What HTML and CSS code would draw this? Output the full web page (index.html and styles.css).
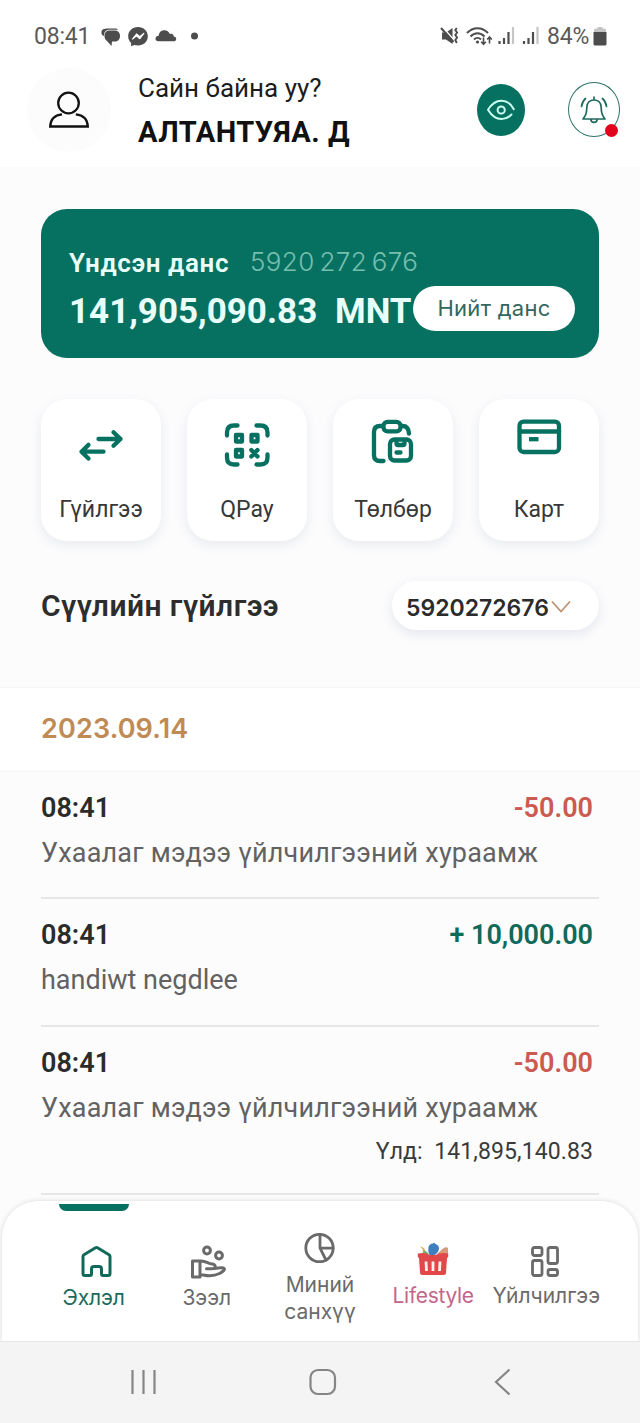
FILE: index.html
```html
<!DOCTYPE html>
<html lang="mn">
<head>
<meta charset="utf-8">
<title>Эхлэл</title>
<link rel="stylesheet" href="styles.css">
</head>
<body>
<div class="phone">
  <div class="status">
    <span class="clock">08:41</span>
    <svg class="status-left" width="100" height="24" viewBox="0 0 100 24" fill="#4d4d4d">
      <path d="M.5 9.500C0 5 3 4.500 7 4.500h7c1.500 0 2.500.5 3 1.200H8.500C4.500 5.700 3 8 3 12 1.500 11.500.7 10.500.5 9.500Z"/>
      <path d="M9 6.500h4c4 0 6 2 6 5.500s-2 5.500-5.500 5.500H11l-.5 4.500-4.500-5c-1.700-1-2.500-2.800-2.500-5 0-3.500 1.800-5.500 5.500-5.500Z"/>
      <path d="M37 3c-5.600 0-9.800 4-9.800 9.200 0 2.800 1.100 5 2.900 6.700v3.300l3.300-1.200c1.100.3 2.300.5 3.600.5 5.600 0 9.800-4 9.800-9.300C46.800 7 42.600 3 37 3Z"/>
      <path d="m31.500 15 4-5 3.300 2.800 4-3.300-4 5.200-3.300-2.800Z" fill="#fff" stroke="#fff" stroke-width="1.200" stroke-linejoin="round"/>
      <path d="M57.500 17.300c-2.200 0-3-1.300-3-2.600 0-1.700 1.400-2.800 3.200-2.900.2-3.500 2.600-5.600 5.600-5.600 2.800 0 4.600 1.600 5.500 3.700 3.500-.6 4 2 3.900 2.600 1.600.2 2.500 1.200 2.500 2.500 0 1.400-1.100 2.300-2.700 2.300Z"/>
      <circle cx="93.500" cy="12" r="3.500"/>
    </svg>
    <svg class="status-right" width="106" height="24" viewBox="0 0 106 24" fill="none" stroke="#4d4d4d" stroke-width="1.800">
      <path d="M2 8.500h4L12.500 4v16L6 15.500H2Z" fill="#4d4d4d" stroke="none"/>
      <path d="M2.500 3 14.500 16.500" stroke="#fff" stroke-width="1.500"/>
      <path d="M1 4 13.500 18" stroke-width="2"/>
      <path d="m16.800 4-1.500 2 1.800 2.500-1.800 2.500 1.800 2.500-1.800 2.500 1.500 3" stroke-width="1.900"/>
      <path d="M27 9c6-6.500 15-6.500 21 0M30.500 12.500c4-4.300 10-4.300 14 0M34 15.500c2-2 5-2 7 0" stroke-width="2"/>
      <circle cx="37.500" cy="18" r="1.600" fill="#4d4d4d" stroke="none"/>
      <path d="M43.500 13.500v6.500m-2.300-2.300 2.300 2.500 2.300-2.500M49.500 19.500V13m-2.300 2.500 2.300-2.500 2.300 2.500" stroke-width="1.600"/>
      <path d="M59.500 20v-3M64 20v-6M68.500 20V8M84 20v-3M88.500 20v-6M93 20V8" stroke-width="2.200"/>
      <path d="M73 20V3M97.500 20V3" stroke="#c6c6c6" stroke-width="2.200"/>
    </svg>
    <span class="percent">84%</span>
    <svg width="14" height="22" viewBox="0 0 14 22">
      <path d="M1 8V5.500q0-2 2-2h1.500V2h5v1.500H11q2 0 2 2V8Z" fill="#c4c4c4"/>
      <path d="M.5 7h13v12q0 1.500-1.500 1.500H2Q.5 20.500.5 19Z" fill="#4d4d4d"/>
    </svg>
  </div>

  <header class="header">
    <div class="avatar">
      <svg width="44" height="40" viewBox="0 0 44 40" fill="none" stroke="#111" stroke-width="2.300">
        <circle cx="21.500" cy="13" r="10.300"/>
        <path d="M15 24.300C8 25 3.500 29 3.200 36.500h37.600c-.3-7.500-4.800-11.500-12-12.200"/>
      </svg>
    </div>
    <div class="greeting">
      <div class="hello">Сайн байна уу?</div>
      <div class="name">АЛТАНТУЯА. Д</div>
    </div>
    <div class="eye">
      <svg width="30" height="24" viewBox="0 0 30 24" fill="none" stroke="#c9fff0" stroke-width="2" stroke-linecap="round" stroke-linejoin="round">
        <path d="M25.500 16.500C22.500 19.600 19 21 15.500 21 10 21 5.500 17.500 2 11.700 5.500 6 10 2.700 15.500 2.700c5 0 9.400 3 12.300 8.500"/>
        <circle cx="15.200" cy="12" r="3.600"/>
      </svg>
    </div>
    <div class="bell">
      <svg width="28" height="30" viewBox="0 0 28 30" fill="none" stroke="#1f6a5e" stroke-width="1.700" stroke-linecap="round" stroke-linejoin="round">
        <path d="M14 2v3M6.800 12.500C6.800 7.500 10 5 14 5s7.200 2.500 7.200 7.500c0 6 1.300 8 3.800 11.500H3c2.500-3.500 3.800-5.500 3.800-11.500ZM10.800 24.200c.3 4.200 6.100 4.200 6.400 0M5.500 3.500C3.200 5.500 2 8 1.500 11.500M22.500 3.500c2.300 2 3.500 4.500 4 8"/>
      </svg>
      <i class="dot"></i>
    </div>
  </header>

  <section class="account">
    <div class="account-row">
      <span class="account-title">Үндсэн данс</span>
      <span class="account-number">5920 272 676</span>
    </div>
    <div class="account-row">
      <span class="amount">141,905,090.83</span>
      <span class="currency">MNT</span>
      <span class="pill">Нийт данс</span>
    </div>
  </section>

  <nav class="tiles">
    <div class="tile">
      <svg class="tile-icon" viewBox="0 0 120 95">
        <path d="M57.500 40h22M72.500 33.200l7 6.800-7 6.800M62.500 52.700h-22M47.500 45.900l-7 6.800 7 6.800"/>
      </svg>
      <span>Гүйлгээ</span>
    </div>
    <div class="tile">
      <svg class="tile-icon" viewBox="0 0 120 95">
        <path d="M40 36.500V33.500q0-7 7-7h3.500M69.500 26.500h4q7 0 7 7v3M80.500 55.500v3q0 7-7 7h-4M50.500 65.500H47q-7 0-7-7v-3"/>
        <path d="M49 36h6v6.500h-6ZM64.500 36h6v6.500h-6ZM49 51h6v6.500h-6ZM64.300 51l6.200 6.500M70.500 51l-6.200 6.500"/>
      </svg>
      <span>QPay</span>
    </div>
    <div class="tile">
      <svg class="tile-icon" viewBox="0 0 120 95">
        <rect x="50.500" y="22.800" width="17" height="9.500" rx="4"/>
        <path d="M50 27h-3q-6 0-6 6v23q0 6 6 6h3.500M68 27h1.500q6 0 6.500 7.500"/>
        <rect x="57" y="40.500" width="21" height="21" rx="4.500"/>
        <path d="M63.500 41.500v3q0 1.500 1.500 1.500h5q1.500 0 1.500-1.500v-3M63.500 53.500h4"/>
      </svg>
      <span>Төлбөр</span>
    </div>
    <div class="tile">
      <svg class="tile-icon" viewBox="0 0 120 95">
        <rect x="40.500" y="22.700" width="39.500" height="30.300" rx="4"/>
        <path d="M41 32.500h39"/>
        <path d="M50 40.200h9.500" stroke-linecap="butt"/>
      </svg>
      <span>Карт</span>
    </div>
  </nav>

  <div class="recent">
    <h2 class="recent-title">Сүүлийн гүйлгээ</h2>
    <div class="select">
      <span>5920272676</span>
      <svg width="22" height="16" viewBox="0 0 22 16" fill="none" stroke="#bd8f70" stroke-width="1.700"><path d="m2 1.500 9 10 9-10"/></svg>
    </div>
  </div>

  <div class="date">2023.09.14</div>

  <ul class="list">
    <li class="row">
      <div class="line"><span class="time">08:41</span><span class="sum out">-50.00</span></div>
      <div class="desc">Ухаалаг мэдээ үйлчилгээний хураамж</div>
    </li>
    <li class="row">
      <div class="line"><span class="time">08:41</span><span class="sum in">+ 10,000.00</span></div>
      <div class="desc latin">handiwt negdlee</div>
    </li>
    <li class="row tall">
      <div class="line"><span class="time">08:41</span><span class="sum out">-50.00</span></div>
      <div class="desc">Ухаалаг мэдээ үйлчилгээний хураамж</div>
      <div class="balance">Үлд:&nbsp; 141,895,140.83</div>
    </li>
  </ul>

  <nav class="tabs">
    <div class="tab home">
      <svg width="36" height="36" viewBox="0 0 36 36"><path d="M7 13.500q0-1 1-1.700L19.500 4.700q1-.6 2 0L33 11.800q1 .7 1 1.700V30.500q0 2-2 2h-5q-1.500 0-1.500-1.500v-5q0-2.500-2.500-2.500h-5q-2.500 0-2.500 2.500v5q0 1.500-1.500 1.500H9q-2 0-2-2Z"/></svg>
      <span>Эхлэл</span>
    </div>
    <div class="tab loan">
      <svg width="36" height="36" viewBox="0 0 36 36"><circle cx="18" cy="7.500" r="3.400"/><circle cx="30" cy="12.500" r="3.400"/><path d="M3.500 18h7.500v16H3.500ZM11 18c6-.5 8 2.800 12 3 4 .3 4.500 4.800 0 4.800h-5.500M25.500 25.500c3-.5 6-1.300 9-.5 3 1.500-2 4.500-4 5.500-5 2.500-12 2.500-16 1.500H11"/></svg>
      <span>Зээл</span>
    </div>
    <div class="tab finance">
      <svg width="36" height="36" viewBox="0 0 36 36"><circle cx="17.500" cy="18" r="13.700"/><path d="M18 4.500v13.700h13M18 18.200 24 30"/></svg>
      <span>Миний<br>санхүү</span>
    </div>
    <div class="tab life">
      <svg class="basket" width="36" height="36" viewBox="0 0 36 36">
        <path d="M5 5.500q5.500 0 6 8l-3.500-1q1.500-4-2.500-7Z" fill="#d9b25c"/>
        <path d="m22 13 6-5.500q3-2 5-.5v6Z" fill="#d79a78"/>
        <path d="M8 9.500q4 0 6 4H8Z" fill="#7fae74"/>
        <path d="M13.500 6q1-3.500 4.500-3.500l1-1 1.500 1.500q3.500 1 3.500 4.500-.5 4-4.500 6.500h-5q-2-4.500-1-8Z" fill="#3f7fc0"/>
        <path d="M2.800 12.500q7.500-1.500 12 1.500h5.500q6-3 12.900-1.500v3.500L32 17l-1 14.500q0 2.500-2.500 2.500h-21Q5 34 5 31.500L4 17l-1.200-1Z" fill="#e2484a"/>
        <path d="M11 20.500l.5 9.500M18 20.500v9.500M25 20.500l-.5 9.500" stroke="#fff0ea" stroke-width="2.800"/>
      </svg>
      <span>Lifestyle</span>
    </div>
    <div class="tab services">
      <svg width="36" height="36" viewBox="0 0 36 36"><rect x="4.500" y="4.500" width="9.500" height="8" rx="2"/><rect x="20" y="4.500" width="9.500" height="16" rx="2"/><rect x="4.500" y="17.500" width="9.500" height="15" rx="2"/><rect x="20" y="26.500" width="9.500" height="6" rx="2"/></svg>
      <span>Үйлчилгээ</span>
    </div>
  </nav>

  <div class="system">
    <svg viewBox="0 0 180 80"><path d="M78.500 28v24M89.500 28v24M100.500 28v24"/></svg>
    <svg viewBox="0 0 180 80"><rect x="76.500" y="28" width="24.500" height="24" rx="7.500"/></svg>
    <svg viewBox="0 0 180 80"><path d="M95.500 27.500 82 40l13.500 12.500"/></svg>
  </div>
</div>
</body>
</html>
```
FILE: styles.css
```css
* { box-sizing: border-box; }

body {
  margin: 0;
  background: #fff;
  font-family: Roboto, "Noto Sans", sans-serif;
  color: #2b2b2b;
}

svg { display: block; flex: none; overflow: visible; }

.phone {
  width: 640px;
  height: 1423px;
  overflow: hidden;
  display: flex;
  flex-direction: column;
  background: #fcfcfd;
}

.phone > * { flex: none; }

.status {
  height: 66px;
  padding: 6px 33px 0 34px;
  display: flex;
  align-items: center;
  background: #fff;
  color: #5a5a5a;
  font-size: 23px;
}
.clock { width: 67px; letter-spacing: -0.2px; }
.status-right { margin-left: auto; }
.percent { width: 46px; margin-left: 1px; letter-spacing: -0.2px; }

.header {
  height: 102px;
  padding: 0 20px 14px 27px;
  display: flex;
  align-items: center;
  background: #fff;
  border-bottom: 1px solid #fafafa;
}
.avatar {
  width: 84px;
  height: 84px;
  border-radius: 50%;
  background: #fcfcfc;
  display: flex;
  align-items: center;
  justify-content: center;
}
.greeting { margin-left: 27px; line-height: 44px; white-space: nowrap; color: #1c1c1c; }
.hello { font-size: 26px; }
.name { font-size: 29px; font-weight: 700; letter-spacing: 0.5px; color: #111; }
.eye {
  width: 48px;
  height: 52px;
  margin-left: auto;
  border-radius: 50%;
  background: #077161;
  display: flex;
  align-items: center;
  justify-content: center;
}
.bell {
  position: relative;
  width: 52px;
  height: 55px;
  margin-left: 43px;
  border: 1.5px solid #2d7468;
  border-radius: 50%;
  display: flex;
  align-items: center;
  justify-content: center;
}
.dot {
  position: absolute;
  right: 1px;
  bottom: -1px;
  width: 13px;
  height: 13px;
  border-radius: 50%;
  background: #e2041b;
}

.account {
  height: 149px;
  margin: 41px 41px 0;
  padding: 30px 24px 0 28px;
  border-radius: 26px;
  background: #077161;
  color: #e9fffa;
  white-space: nowrap;
}
.account-row { height: 48px; display: flex; align-items: center; }
.account-title { width: 181px; font-size: 26px; font-weight: 600; letter-spacing: 0.6px; }
.account-number { font: 300 26px/30px Inter, sans-serif; letter-spacing: 0.4px; word-spacing: -3px; color: #76bfae; margin-bottom: 3px; }
.amount { width: 266px; font-size: 35px; font-weight: 700; }
.currency { font-size: 35px; font-weight: 700; }
.pill {
  width: 162px;
  height: 45px;
  margin: 0 0 5px auto;
  border-radius: 23px;
  background: #fff;
  color: #336660;
  font: 400 22px/45px Inter, sans-serif;
  letter-spacing: 0.3px;
  text-align: center;
}

.tiles {
  margin: 41px 41px 0;
  display: flex;
  justify-content: space-between;
}
.tile {
  width: 120px;
  height: 142px;
  border-radius: 26px;
  background: #fff;
  box-shadow: 0 4px 12px rgba(60, 75, 120, 0.1);
  text-align: center;
  font-size: 23px;
  line-height: 32px;
  color: #383838;
}
.tile-icon {
  width: 120px;
  height: 95px;
  fill: none;
  stroke: #077161;
  stroke-width: 4.3;
  stroke-linecap: round;
  stroke-linejoin: round;
}

.recent {
  height: 49px;
  margin: 40px 41px 0;
  display: flex;
  align-items: center;
  justify-content: space-between;
}
.recent-title {
  margin: 0;
  font-size: 30px;
  font-weight: 600;
  letter-spacing: 0.45px;
  line-height: 49px;
  color: #2d2d2d;
}
.select {
  width: 207px;
  height: 49px;
  padding: 4px 14px 0;
  border-radius: 25px;
  background: #fff;
  box-shadow: 0 4px 12px rgba(60, 75, 120, 0.12);
  display: flex;
  align-items: center;
  gap: 1px;
  font: 600 23px Inter, sans-serif;
}

.date {
  height: 85px;
  margin-top: 57px;
  padding-left: 41px;
  background: #fff;
  border: solid #f5f5f5;
  border-width: 1px 0;
  font: 600 27px/82px Inter, sans-serif;
  letter-spacing: 0.15px;
  color: #c08a55;
}

.list { list-style: none; margin: 0; padding: 0 41px; height: 429px; }
.row {
  height: 127.5px;
  padding-top: 14px;
  border-bottom: 2px solid #e6e6e6;
  line-height: 45px;
  white-space: nowrap;
}
.row:first-child { height: 127px; }
.tall { height: 168px; }
.line { display: flex; justify-content: space-between; padding-right: 6px; font-size: 27px; font-weight: 600; }
.out { color: #cb5a50; }
.in { color: #116a59; }
.desc { font-size: 27px; letter-spacing: 0.2px; color: #626262; }
.latin { letter-spacing: 0; }
.balance { padding-right: 6px; line-height: 42px; font-size: 23px; letter-spacing: 0.1px; text-align: right; color: #3a3a3a; }

.tabs {
  height: 140px;
  margin: 0 2px;
  padding: 0 35px;
  display: flex;
  border-radius: 36px 36px 0 0;
  background: #fff;
  box-shadow: 0 0 5px rgba(0, 0, 0, 0.15);
}
.tab {
  position: relative;
  width: 113.2px;
  display: flex;
  flex-direction: column;
  align-items: center;
  gap: 5px;
  font: 400 21px/27px Inter, sans-serif;
  text-align: center;
  white-space: nowrap;
  color: #6a6a6a;
}
.tab svg { fill: none; stroke: #6a6a6a; stroke-width: 2.8; stroke-linejoin: round; stroke-linecap: round; }
.tab .basket { stroke: none; stroke-linecap: butt; }
.home { padding-top: 42px; color: #1b6a5c; letter-spacing: -0.1px; }
.home svg { stroke: #116a59; stroke-width: 3; }
.home::before {
  content: "";
  position: absolute;
  top: 3px;
  left: 22px;
  width: 70px;
  height: 7px;
  border-radius: 0 0 7px 7px;
  background: #077161;
}
.loan { padding-top: 42px; }
.loan svg { stroke-width: 3; }
.finance { padding-top: 29px; }
.life { padding-top: 40px; color: #c4658c; letter-spacing: -0.3px; }
.services { padding-top: 42px; gap: 3px; }

.system {
  height: 82px;
  padding: 0 46px 0 54px;
  display: flex;
  background: #f4f4f4;
  border-top: 1px solid #e6e6e6;
  position: relative;
}
.system svg { width: 180px; height: 80px; fill: none; stroke: #858585; stroke-width: 2.2; }
```
